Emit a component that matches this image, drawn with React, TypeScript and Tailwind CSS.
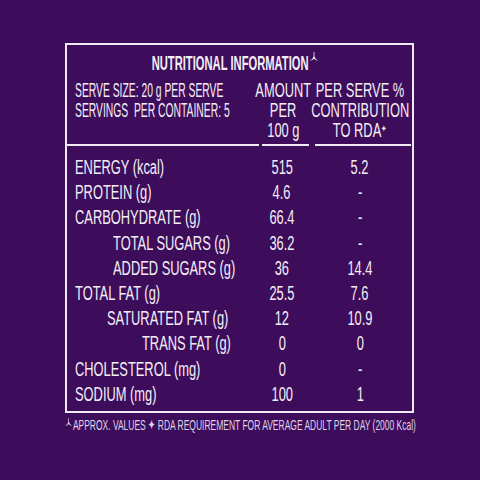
const font = { fontFamily: "'Liberation Sans', Arial, sans-serif" };

type Align = "left" | "center";

// the label uses a condensed face; squeeze Liberation Sans to match
function T({
  children,
  align = "left",
  scale = "scale-x-[0.66]",
}: {
  children: React.ReactNode;
  align?: Align;
  scale?: string;
}) {
  const origin = align === "center" ? "origin-center" : "origin-left";
  return <span className={`inline-block whitespace-nowrap ${scale} ${origin}`}>{children}</span>;
}

function ApproxMark({ className = "" }: { className?: string }) {
  return (
    <svg className={className} viewBox="0 0 10 10" preserveAspectRatio="none" fill="currentColor" aria-hidden>
      <path d="M4.6 0 L5.4 0 L5.5 5 Q6.2 8 10 10 Q6.6 9.4 5 7.6 Q3.4 9.4 0 10 Q3.8 8 4.5 5 Z" />
    </svg>
  );
}

const rows = [
  { label: "ENERGY (kcal)", per100: "515", rda: "5.2", indent: "pl-0" },
  { label: "PROTEIN (g)", per100: "4.6", rda: "-", indent: "pl-0" },
  { label: "CARBOHYDRATE (g)", per100: "66.4", rda: "-", indent: "pl-0" },
  { label: "TOTAL SUGARS (g)", per100: "36.2", rda: "-", indent: "pl-[38px]" },
  { label: "ADDED SUGARS (g)", per100: "36", rda: "14.4", indent: "pl-[38px]" },
  { label: "TOTAL FAT (g)", per100: "25.5", rda: "7.6", indent: "pl-0" },
  { label: "SATURATED FAT (g)", per100: "12", rda: "10.9", indent: "pl-[32px]" },
  { label: "TRANS FAT (g)", per100: "0", rda: "0", indent: "pl-[67px]" },
  { label: "CHOLESTEROL (mg)", per100: "0", rda: "-", indent: "pl-0" },
  { label: "SODIUM  (mg)", per100: "100", rda: "1", indent: "pl-0" },
];

const cols = "grid grid-cols-[195px_53px_96px]";

export default function App() {
  return (
    <div className="h-[480px] w-[480px] overflow-hidden bg-[#3d0c5b] pl-[65px] pt-[43px] text-[#f3eef6]" style={font}>
      <div className="h-[370px] w-[349px] border-2 border-[#efe9f3]">
        <div className="flex justify-center pr-[8px] pt-[7px] text-[20px] font-bold leading-[20px]">
          <T align="center" scale="scale-x-[0.56]">
            NUTRITIONAL INFORMATION
            <ApproxMark className="ml-[2px] inline-block h-[9px] w-[16px] align-[9px]" />
          </T>
        </div>

        <div className={`${cols} mt-[7px] text-[19.5px] leading-[20px]`}>
          <div className="flex flex-col pl-[8px]">
            <T scale="scale-x-[0.53]">SERVE SIZE: 20 g PER SERVE</T>
            <T scale="scale-x-[0.53]">SERVINGS&nbsp; PER CONTAINER: 5</T>
          </div>
          <div className="flex flex-col items-center pr-[11px]">
            <T align="center">AMOUNT</T>
            <T align="center">PER</T>
            <T align="center">100 g</T>
          </div>
          <div className="flex flex-col items-center pr-[6px]">
            <T align="center">PER SERVE %</T>
            <T align="center">CONTRIBUTION</T>
            <T align="center">
              TO RDA<sup className="text-[10px]">✦</sup>
            </T>
          </div>
        </div>

        <div className={`${cols} mt-[4px]`}>
          <div className="h-[2px] w-[192px] bg-[#efe9f3]" />
          <div className="h-[2px] w-[47px] bg-[#efe9f3]" />
          <div className="h-[2px] bg-[#efe9f3]" />
        </div>

        <div className="mt-[9px] text-[19.5px] leading-[25.2px]">
          {rows.map((r) => (
            <div key={r.label} className={cols}>
              <div className="pl-[8px]">
                <div className={r.indent}>
                  <T>{r.label}</T>
                </div>
              </div>
              <div className="flex justify-center pr-[13px]">
                <T align="center">{r.per100}</T>
              </div>
              <div className="flex justify-center pr-[6px]">
                <T align="center">{r.rda}</T>
              </div>
            </div>
          ))}
        </div>
      </div>

      <div className="mt-[3px] text-[15px] leading-[18px] text-[#ddd3e6]">
        <T scale="scale-x-[0.565]">
          <ApproxMark className="mr-[1px] inline-block h-[8px] w-[13px] align-[4px]" />
          APPROX. VALUES ✦ RDA REQUIREMENT FOR AVERAGE ADULT PER DAY (2000 Kcal)
        </T>
      </div>
    </div>
  );
}
